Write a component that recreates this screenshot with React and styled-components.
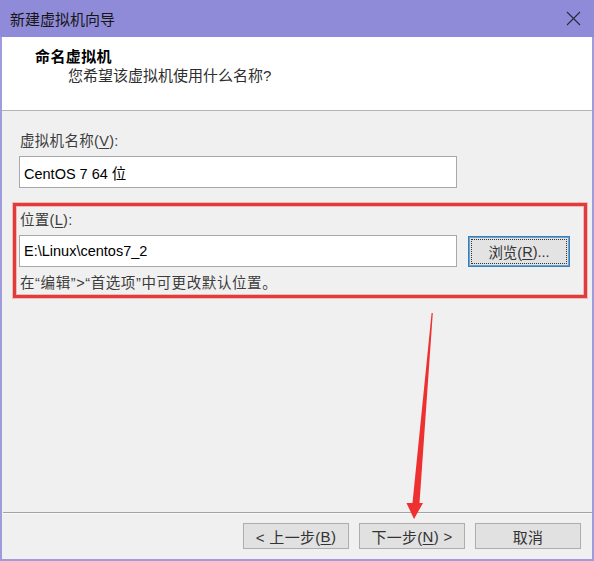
import React from "react";
import styled, { createGlobalStyle } from "styled-components";

const GlobalStyle = createGlobalStyle`
  html, body {
    margin: 0;
    padding: 0;
    background: #f0f0f0;
  }
  * {
    box-sizing: border-box;
  }
`;

const FONT = `"Liberation Sans", "Noto Sans CJK SC", sans-serif`;

// window frame
const Window = styled.div`
  position: relative;
  width: 594px;
  height: 561px;
  display: flex;
  flex-direction: column;
  background: #f0f0f0;
  border-left: 2px solid #9f9bdc;
  border-right: 2px solid #9f9bdc;
  border-bottom: 2px solid #9f9bdc;
  font-family: ${FONT};
`;

const TitleBar = styled.div`
  height: 37px;
  flex: none;
  margin: 0 -2px;
  padding: 0 13px 0 10px;
  display: flex;
  align-items: center;
  justify-content: space-between;
  background: #8f8bd8;
  color: #161616;
  font-size: 15px;
`;

const CloseButton = styled.div`
  width: 16px;
  height: 16px;
  display: flex;
  align-items: center;
  justify-content: center;
`;

const Header = styled.div`
  height: 74px;
  flex: none;
  padding: 11px 0 0 33px;
  background: #fff;
  border-bottom: 1px solid #b4b4b4;
`;

const HeaderTitle = styled.div`
  font-size: 15px;
  line-height: 18px;
  font-weight: bold;
  letter-spacing: 0.4px;
  color: #000;
`;

const HeaderSub = styled.div`
  margin-top: 1px;
  padding-left: 33px;
  font-size: 15px;
  line-height: 18px;
  color: #2e2e2e;
`;

const Content = styled.div`
  flex: 1;
  padding: 21px 0 0 17px;
  display: flex;
  flex-direction: column;
`;

const Label = styled.div`
  padding-left: 1px;
  font-size: 14.5px;
  line-height: 18px;
  letter-spacing: 0.3px;
  color: #3c3c3c;
`;

const U = styled.span`
  text-decoration: underline;
  text-underline-offset: 2px;
`;

const TextBox = styled.div`
  width: 438px;
  height: 32px;
  margin-top: 6px;
  padding-left: 4px;
  display: flex;
  align-items: center;
  background: #fff;
  border: 1px solid #a8a8a8;
  font-size: 14.5px;
  color: #000;
`;

const Highlight = styled.div`
  width: 574px;
  margin: 15px 0 0 -6px;
  padding: 5px 3px 3px 3px;
  border: 3px solid #e23b3b;
  box-shadow: 0 0 0 1px rgba(240, 120, 120, 0.45),
    inset 0 0 0 1px rgba(240, 120, 120, 0.45);
`;

const InputRow = styled.div`
  display: flex;
  align-items: center;
  gap: 11px;
`;

const BrowseButton = styled.div`
  position: relative;
  width: 102px;
  height: 31px;
  margin-top: 7px;
  display: flex;
  align-items: center;
  justify-content: center;
  background: #e3e3e3;
  border: 1px solid #3a7fb8;
  box-shadow: inset 0 0 0 1px #6aa3d2;
  font-size: 14.5px;
  color: #333;

  &::after {
    content: "";
    position: absolute;
    inset: 2px;
    border: 1px dotted #333;
  }
`;

const Hint = styled.div`
  margin-top: 7px;
  padding-left: 1px;
  font-size: 14.5px;
  line-height: 18px;
  letter-spacing: 0.6px;
  color: #3c3c3c;
`;

const Footer = styled.div`
  flex: none;
  border-top: 1px solid #a3a3a3;
  box-shadow: inset 0 1px 0 #f8f8f8;
  margin-left: 1px;
  padding: 10px 11px 10px 0;
  display: flex;
  justify-content: flex-end;
  gap: 10px;
`;

const Button = styled.div`
  width: 106px;
  height: 26px;
  display: flex;
  align-items: center;
  justify-content: center;
  background: #e1e1e1;
  border: 1px solid #adadad;
  font-size: 15px;
  letter-spacing: 0.3px;
  color: #333;
`;

const ArrowLayer = styled.svg`
  position: absolute;
  left: 0;
  top: 0;
  pointer-events: none;
`;

const CloseIcon = () => (
  <svg width="15" height="15" viewBox="0 0 15 15">
    <path d="M1 1 L14 14 M14 1 L1 14" stroke="#2a2a3a" strokeWidth="1.1" fill="none" />
  </svg>
);

const App = () => (
  <>
    <GlobalStyle />
    <Window>
      <TitleBar>
        <span>新建虚拟机向导</span>
        <CloseButton>
          <CloseIcon />
        </CloseButton>
      </TitleBar>

      <Header>
        <HeaderTitle>命名虚拟机</HeaderTitle>
        <HeaderSub>您希望该虚拟机使用什么名称?</HeaderSub>
      </Header>

      <Content>
        <Label>
          虚拟机名称(<U>V</U>):
        </Label>
        <TextBox>CentOS 7 64 位</TextBox>

        <Highlight>
          <Label>
            位置(<U>L</U>):
          </Label>
          <InputRow>
            <TextBox>E:\Linux\centos7_2</TextBox>
            <BrowseButton>
              浏览(<U>R</U>)...
            </BrowseButton>
          </InputRow>
          <Hint>在“编辑”&gt;“首选项”中可更改默认位置。</Hint>
        </Highlight>
      </Content>

      <Footer>
        <Button>
          &lt; 上一步(<U>B</U>)
        </Button>
        <Button>
          下一步(<U>N</U>) &gt;
        </Button>
        <Button>取消</Button>
      </Footer>

      <ArrowLayer width="594" height="561" viewBox="0 0 594 561">
        <polygon
          points="430.8,313 417.5,503 421,503 412,519 404.5,503 410.5,503 429.6,313"
          fill="#ee3030"
        />
      </ArrowLayer>
    </Window>
  </>
);

export default App;
